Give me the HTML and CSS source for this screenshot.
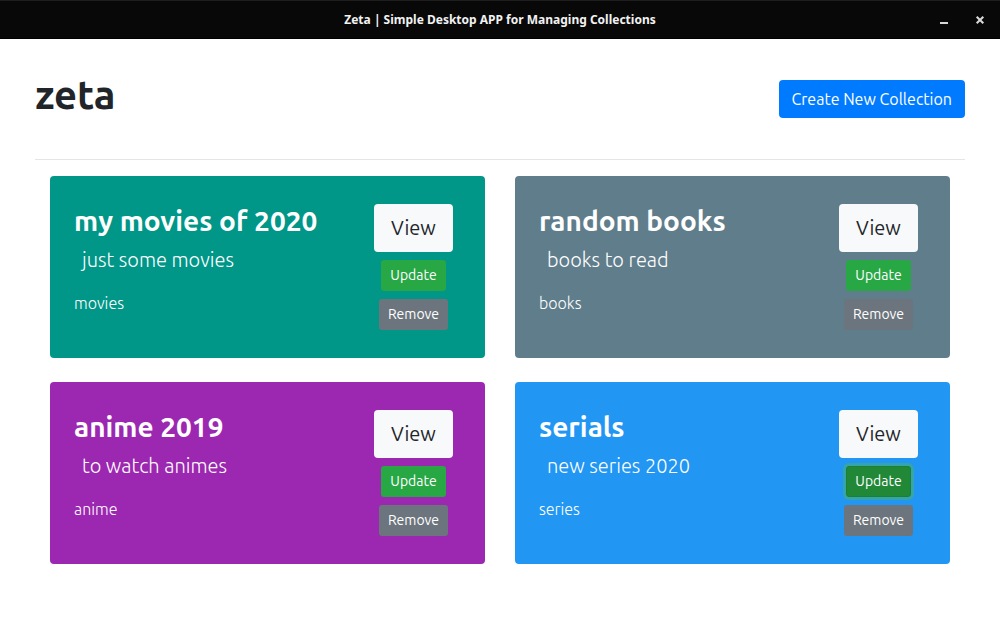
FILE: index.html
```html
<!DOCTYPE html>
<html lang="en">
<head>
<meta charset="utf-8">
<meta name="viewport" content="width=device-width, initial-scale=1">
<title>Zeta | Simple Desktop APP for Managing Collections</title>
<link rel="stylesheet" href="styles.css">
</head>
<body>
<div class="titlebar">
  <span class="titlebar-text">Zeta | Simple Desktop APP for Managing Collections</span>
  <div class="titlebar-controls">
    <button class="window-button" type="button" aria-label="Minimize">
      <svg width="12" height="12" viewBox="0 0 12 12"><path d="M2 8h8v2H2z" fill="#d8d8d8"/></svg>
    </button>
    <button class="window-button" type="button" aria-label="Close">
      <svg width="12" height="12" viewBox="0 0 12 12"><path d="M2.7 2.7l6.6 6.6M9.3 2.7L2.7 9.3" stroke="#d8d8d8" stroke-width="2.1" fill="none"/></svg>
    </button>
  </div>
</div>
<main class="page">
  <header class="page-header">
    <h1 class="brand">zeta</h1>
    <button class="btn btn-primary" type="button">Create New Collection</button>
  </header>
  <section class="collections">
    <article class="card card-teal">
      <div class="card-text">
        <h3 class="card-title">my movies of 2020</h3>
        <p class="card-lead">just some movies</p>
        <p class="card-type">movies</p>
      </div>
      <div class="card-actions">
        <button class="btn btn-view" type="button">View</button>
        <button class="btn btn-small btn-update" type="button">Update</button>
        <button class="btn btn-small btn-remove" type="button">Remove</button>
      </div>
    </article>
    <article class="card card-slate">
      <div class="card-text">
        <h3 class="card-title">random books</h3>
        <p class="card-lead">books to read</p>
        <p class="card-type">books</p>
      </div>
      <div class="card-actions">
        <button class="btn btn-view" type="button">View</button>
        <button class="btn btn-small btn-update" type="button">Update</button>
        <button class="btn btn-small btn-remove" type="button">Remove</button>
      </div>
    </article>
    <article class="card card-purple">
      <div class="card-text">
        <h3 class="card-title">anime 2019</h3>
        <p class="card-lead">to watch animes</p>
        <p class="card-type">anime</p>
      </div>
      <div class="card-actions">
        <button class="btn btn-view" type="button">View</button>
        <button class="btn btn-small btn-update" type="button">Update</button>
        <button class="btn btn-small btn-remove" type="button">Remove</button>
      </div>
    </article>
    <article class="card card-blue">
      <div class="card-text">
        <h3 class="card-title">serials</h3>
        <p class="card-lead">new series 2020</p>
        <p class="card-type">series</p>
      </div>
      <div class="card-actions">
        <button class="btn btn-view" type="button">View</button>
        <button class="btn btn-small btn-update is-active" type="button">Update</button>
        <button class="btn btn-small btn-remove" type="button">Remove</button>
      </div>
    </article>
  </section>
</main>
</body>
</html>
```
FILE: styles.css
```css
*,
*::before,
*::after {
  box-sizing: border-box;
}

body {
  margin: 0;
  background: #fff;
  color: #212529;
  font-family: Ubuntu, "Noto Sans", "Open Sans", sans-serif;
  font-size: 16px;
  line-height: 24px;
}

.titlebar {
  display: grid;
  grid-template-columns: 1fr auto 1fr;
  align-items: center;
  height: 39px;
  padding: 0 14px;
  background: #080808;
  border-top: 1px solid #1e1e1e;
  border-bottom: 1px solid #000;
}

.titlebar-text {
  grid-column: 2;
  color: #f2f2f2;
  font-family: "Noto Sans", sans-serif;
  font-size: 12px;
  font-weight: 700;
}

.titlebar-controls {
  display: flex;
  justify-content: flex-end;
  gap: 24px;
}

.window-button {
  display: flex;
  padding: 0;
  border: 0;
  background: none;
}

.page {
  padding: 0 35px 24px;
}

.page-header {
  display: flex;
  align-items: center;
  justify-content: space-between;
  height: 121px;
  border-bottom: 1px solid #e5e5e5;
}

.brand {
  margin: 0 0 8px;
  font-size: 40px;
  font-weight: 600;
  line-height: 48px;
}

.collections {
  display: grid;
  grid-template-columns: 1fr 1fr;
  gap: 24px 30px;
  padding: 16px 15px 0;
}

.card {
  display: flex;
  justify-content: space-between;
  padding: 28px 32px 28px 24px;
  border-radius: 4px;
  color: #fff;
}

.card-teal { background: #009688; }
.card-slate { background: #607d8b; }
.card-purple { background: #9c27b0; }
.card-blue { background: #2196f3; }

.card-title {
  margin: 0 0 7px;
  font-size: 28px;
  font-weight: 600;
  line-height: 34px;
}

.card-lead {
  margin: 0 0 16px;
  padding-left: 8px;
  font-size: 20px;
  font-weight: 300;
  line-height: 30px;
}

.card-type {
  margin: 0;
  font-weight: 300;
}

.card-actions {
  display: flex;
  flex-direction: column;
  align-items: center;
  gap: 8px;
}

.btn {
  padding: 6px 12px;
  border: 1px solid transparent;
  border-radius: 4px;
  color: #fff;
  font-family: inherit;
  font-size: 16px;
  line-height: 24px;
  white-space: nowrap;
}

.btn-primary {
  min-width: 186px;
  background: #007bff;
}

.btn-view {
  min-width: 79px;
  padding: 8px 16px;
  background: #f8f9fa;
  color: #212529;
  font-size: 20px;
  line-height: 30px;
}

.btn-small {
  padding: 4px 8px;
  border-radius: 3px;
  font-size: 14px;
  line-height: 21px;
}

.btn-update {
  min-width: 65px;
  background: #28a745;
}

.btn-remove {
  min-width: 69px;
  background: #6c757d;
}

.is-active {
  border-color: #1e7e34;
  background: #218838;
  box-shadow: 0 0 0 3px rgba(72, 180, 97, 0.5);
}
```
